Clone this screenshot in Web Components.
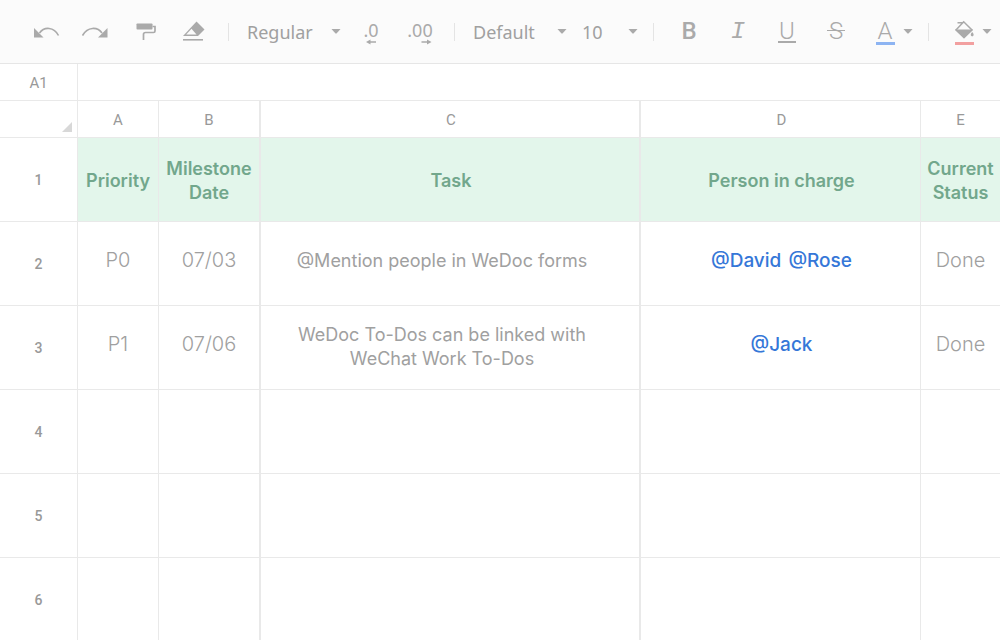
<!DOCTYPE html>
<html lang="en">
<head>
<meta charset="utf-8">
<meta name="viewport" content="width=device-width, initial-scale=1">
<title>Milestones</title>
<style>
html, body {
  margin: 0;
  height: 100%;
  overflow: hidden;
}
body {
  background: #fff;
  color: #a0a0a0;
  font-family: Inter, "Liberation Sans", sans-serif;
  --line: #e9e9e9;
  --icon: #aaa;
}
</style>
</head>
<body>
<sheet-app></sheet-app>

<template id="sheet-app">
  <style>
  :host {
    display: block;
  }
  .sep {
    flex: none;
    width: 1px;
    height: 18px;
    margin: 0 10px;
    background: #e4e4e4;
  }
  .zero {
    font: 18px/20px "Noto Sans", sans-serif;
  }
  .b {
    font-weight: 500;
    line-height: 22px;
  }
  .i {
    font-family: "Liberation Mono", monospace;
    font-style: italic;
  }
  .u, .s, .a {
    font-weight: 300;
    line-height: 22px;
  }
  .u {
    padding: 0 1px;
    height: 21px;
    border-bottom: 2px solid var(--icon);
  }
  .s {
    padding: 0 2px;
    background: linear-gradient(var(--icon), var(--icon)) center / 100% 1px no-repeat;
  }
  .bar {
    width: 19px;
    height: 3px;
  }
  </style>
  <sheet-toolbar>
    <tool-button label="Undo">
      <svg width="28" height="24" viewBox="1 0 28 24"><path d="M2 8v9.500h9.500z" fill="#aaa"/><path d="M7.500 13C12 6.500 22 6.500 26.500 15.500" fill="none" stroke="#aaa" stroke-width="1.600"/></svg>
    </tool-button>
    <tool-button label="Redo">
      <svg width="28" height="24" viewBox="1 0 28 24"><path d="M26.500 8v9.500H17z" fill="#aaa"/><path d="M21 13C16.500 6.500 6.500 6.500 1.500 15.500" fill="none" stroke="#aaa" stroke-width="1.600"/></svg>
    </tool-button>
    <tool-button label="Format painter">
      <svg width="28" height="24" viewBox="1 0 28 24"><rect x="6.500" y="3.500" width="16" height="6" rx=".8" fill="#aaa"/><path d="M22.500 6.500H25v4.500q0 1.500-1.500 1.500h-8q-2 0-2 2V20" fill="none" stroke="#aaa" stroke-width="1.700"/></svg>
    </tool-button>
    <tool-button label="Clear format">
      <svg width="28" height="24" viewBox="1 0 28 24"><path d="M17.500 1.500l8 8-6.500 6.500h-15z" fill="#aaa"/><path d="M12.500 8.800l5 5.700H7.200z" fill="#fbfbfb"/><path d="M4 19.800h20" stroke="#aaa" stroke-width="1.600"/></svg>
    </tool-button>
    <span class="sep"></span>
    <tool-select label="Number format" value="Regular" style="--text: 94px"></tool-select>
    <tool-button label="Decrease decimals">
      <span class="zero">.0</span>
      <svg slot="under" width="12" height="6" viewBox="0 0 12 6"><path d="M1 3l4.500-2.500v1.700H11v1.600H5.500v1.700z" fill="#aaa"/></svg>
    </tool-button>
    <tool-button label="Increase decimals">
      <span class="zero">.00</span>
      <svg slot="under" width="24" height="6" viewBox="0 0 24 6"><path d="M23.500 3L19 .5v1.700h-5.500v1.600H19v1.700z" fill="#aaa"/></svg>
    </tool-button>
    <span class="sep"></span>
    <tool-select label="Font" value="Default" style="--text: 94px"></tool-select>
    <tool-select label="Font size" value="10" style="--text: 56px; --start: 10px"></tool-select>
    <span class="sep"></span>
    <tool-button label="Bold"><span class="b">B</span></tool-button>
    <tool-button label="Italic"><span class="i">I</span></tool-button>
    <tool-button label="Underline"><span class="u">U</span></tool-button>
    <tool-button label="Strikethrough"><span class="s">S</span></tool-button>
    <tool-button label="Text colour" menu><span class="a">A</span><span slot="under" class="bar" style="background: #8db4f2"></span></tool-button>
    <span class="sep"></span>
    <tool-button label="Fill colour" menu>
      <svg width="28" height="24" viewBox="1 0 28 24"><path d="M8.500 2.700h6M14.700 1.800L7 10l8 7.500 8-7.500z" fill="none" stroke="#aaa" stroke-width="1.500"/><path d="M6 9.500h18l-9 9z" fill="#aaa"/><path d="M23.200 12q3 3.500 0 4.500-3-1 0-4.500" fill="#aaa"/></svg>
      <span slot="under" class="bar" style="background: #f2a0a0"></span>
    </tool-button>
  </sheet-toolbar>
  <formula-bar cell="A1"></formula-bar>
  <sheet-grid></sheet-grid>
</template>

<template id="sheet-toolbar">
  <style>
  :host {
    display: flex;
    align-items: center;
    height: 63px;
    padding-left: 22px;
    background: #fbfbfb;
    border-bottom: 1px solid #e6e6e6;
    overflow: hidden;
  }
  </style>
  <slot></slot>
</template>

<template id="tool-button">
  <style>
  :host {
    display: block;
    flex: none;
  }
  button {
    display: flex;
    align-items: center;
    gap: 5px;
    padding: 0 10px 0 11px;
    border: 0;
    background: none;
    color: var(--icon);
    font: 24px/24px Roboto, sans-serif;
  }
  :host([menu]) button {
    padding-right: 5px;
    gap: 4px;
  }
  .face {
    position: relative;
    display: flex;
    justify-content: center;
    align-items: flex-start;
    width: 28px;
    height: 24px;
  }
  .under {
    position: absolute;
    left: 0;
    right: 0;
    bottom: -1px;
    display: flex;
    justify-content: center;
  }
  .caret {
    display: none;
  }
  :host([menu]) .caret {
    display: block;
  }
  </style>
  <button type="button">
    <span class="face"><slot></slot><span class="under"><slot name="under"></slot></span></span>
    <svg class="caret" width="10" height="5" viewBox="0 0 10 5"><path d="M.5 0h9L5.500 4.500h-1z" fill="#aaa"/></svg>
  </button>
</template>

<template id="tool-select">
  <style>
  :host {
    display: block;
    flex: none;
  }
  label {
    display: grid;
    align-items: center;
    width: var(--text);
    padding: 0 5px 0 var(--start, 8px);
  }
  select, svg {
    grid-area: 1 / 1;
  }
  select {
    appearance: none;
    width: 100%;
    margin: 0;
    padding: 0;
    border: 0;
    background: none;
    color: #a0a0a0;
    font: 18px/24px "Noto Sans", sans-serif;
  }
  svg {
    justify-self: end;
    pointer-events: none;
  }
  </style>
  <label>
    <select><option></option></select>
    <svg width="10" height="5" viewBox="0 0 10 5"><path d="M.5 0h9L5.500 4.500h-1z" fill="#aaa"/></svg>
  </label>
</template>

<template id="formula-bar">
  <style>
  :host {
    display: flex;
    height: 36px;
    border-bottom: 1px solid var(--line);
  }
  input {
    box-sizing: border-box;
    margin: 0;
    padding: 2px 0 0;
    border: 0;
    outline: 0;
    background: none;
    color: #999;
    font: 15px Roboto, sans-serif;
  }
  .name {
    width: 78px;
    border-right: 1px solid var(--line);
    text-align: center;
  }
  .value {
    flex: 1;
    min-width: 0;
    padding: 2px 8px 0;
  }
  </style>
  <input class="name" aria-label="Cell">
  <input class="value" aria-label="Formula">
</template>

<template id="sheet-grid">
  <style>
  :host {
    display: block;
  }
  table {
    width: 100%;
    table-layout: fixed;
    border-collapse: separate;
    border-spacing: 0;
  }
  .rows { width: 78px; }
  .a { width: 81px; }
  .b { width: 102px; }
  .c { width: 38%; }
  .e { width: 79px; }
  th, td {
    box-sizing: border-box;
    padding: 0;
    border-right: 1px solid var(--line);
    border-bottom: 1px solid var(--line);
    text-align: center;
    font-size: 18px;
    line-height: 24px;
  }
  tr > :last-child {
    border-right: 0;
  }
  tr > :nth-child(3), tr > :nth-child(4) {
    border-right-width: 2px;
  }
  tr > :nth-child(4), tr > :nth-child(5) {
    padding-left: 2px;
  }
  thead th {
    height: 37px;
    padding-top: 2px;
    color: #999;
    font: 15px Roboto, sans-serif;
  }
  thead td {
    vertical-align: bottom;
  }
  .corner {
    display: block;
    margin: 0 5px 5px auto;
  }
  tbody th {
    height: 84px;
    color: #999;
    font: 500 14px Roboto, sans-serif;
  }
  tbody td {
    padding-bottom: 6px;
  }
  .plain {
    padding-bottom: 8px;
    font-size: 20px;
    font-weight: 300;
  }
  .task {
    padding-right: 18px;
  }
  .task.wrap {
    padding-bottom: 2px;
  }
  .task span {
    display: inline-block;
    max-width: 300px;
  }
  .head td {
    padding-top: 2px;
    padding-bottom: 0;
    background: #e3f6eb;
    color: #72a78c;
    font-weight: 600;
  }
  a {
    color: #3577d8;
    font-size: 19px;
    font-weight: 500;
    text-decoration: none;
  }
  a + a {
    margin-left: 2px;
  }
  </style>
  <table>
    <colgroup><col class="rows"><col class="a"><col class="b"><col class="c"><col><col class="e"></colgroup>
    <thead>
      <tr>
        <td><svg class="corner" width="10" height="10" viewBox="0 0 10 10"><path d="M10 0v10H0z" fill="#d8d8d8"/></svg></td>
        <th scope="col">A</th><th scope="col">B</th><th scope="col">C</th><th scope="col">D</th><th scope="col">E</th>
      </tr>
    </thead>
    <tbody></tbody>
  </table>
</template>

<script>
const rows = [
  ['Priority', 'Milestone Date', 'Task', 'Person in charge', 'Current Status'],
  ['P0', '07/03', '@Mention people in WeDoc forms', ['@David', '@Rose'], 'Done'],
  ['P1', '07/06', 'WeDoc To-Dos can be linked with WeChat Work To-Dos', ['@Jack'], 'Done'],
  [],
  [],
  [],
];

class SheetElement extends HTMLElement {
  constructor() {
    super();
    const template = document.getElementById(this.localName);
    this.attachShadow({ mode: 'open' }).appendChild(template.content.cloneNode(true));
  }

  $(selector) {
    return this.shadowRoot.querySelector(selector);
  }
}

class SheetToolbar extends SheetElement {}

class ToolButton extends SheetElement {
  connectedCallback() {
    this.$('button').setAttribute('aria-label', this.getAttribute('label'));
  }
}

class ToolSelect extends SheetElement {
  connectedCallback() {
    this.$('select').setAttribute('aria-label', this.getAttribute('label'));
    this.$('option').textContent = this.getAttribute('value');
  }
}

class FormulaBar extends SheetElement {
  connectedCallback() {
    this.$('.name').value = this.getAttribute('cell');
  }
}

class SheetGrid extends SheetElement {
  connectedCallback() {
    this.$('tbody').innerHTML = rows.map((row, i) => `
      <tr class="${i ? '' : 'head'}">
        <th scope="row">${i + 1}</th>
        ${[0, 1, 2, 3, 4].map((col) => this.cell(row[col], i, col)).join('')}
      </tr>`).join('');
  }

  cell(value = '', row, col) {
    if (Array.isArray(value)) {
      return `<td>${value.map((name) => `<a href="#${name.slice(1)}">${name}</a>`).join(' ')}</td>`;
    }
    if (!row) return `<td>${value}</td>`;
    if (col !== 2) return `<td class="plain">${value}</td>`;
    // long tasks take two lines and sit a little lower in the row
    return `<td class="task ${value.length > 32 ? 'wrap' : ''}"><span>${value}</span></td>`;
  }
}

class SheetApp extends SheetElement {}

customElements.define('sheet-toolbar', SheetToolbar);
customElements.define('tool-button', ToolButton);
customElements.define('tool-select', ToolSelect);
customElements.define('formula-bar', FormulaBar);
customElements.define('sheet-grid', SheetGrid);
customElements.define('sheet-app', SheetApp);
</script>
</body>
</html>
